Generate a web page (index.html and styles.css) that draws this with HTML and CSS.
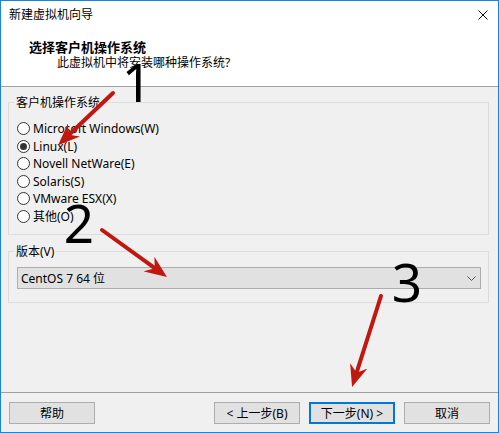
FILE: index.html
```html
<!DOCTYPE html>
<html lang="zh-CN">
<head>
    <meta charset="UTF-8">
    <title>新建虚拟机向导</title>
    <link rel="stylesheet" href="styles.css">
</head>
<body>
    <div class="window">
        <div class="titlebar">
            <div class="title">新建虚拟机向导</div>
            <svg class="close" width="10" height="10" viewBox="0 0 10 10">
                <path d="M0.5 0.5 L9.5 9.5 M9.5 0.5 L0.5 9.5" stroke="#111" stroke-width="1" fill="none"/>
            </svg>
        </div>

        <div class="header">
            <div class="header-title">选择客户机操作系统</div>
            <div class="header-desc">此虚拟机中将安装哪种操作系统?</div>
        </div>

        <div class="content">
            <fieldset class="group os">
                <legend>客户机操作系统</legend>
                <div class="radio"><span class="circle"></span>Microsoft Windows(W)</div>
                <div class="radio checked"><span class="circle"></span>Linux(L)</div>
                <div class="radio"><span class="circle"></span>Novell NetWare(E)</div>
                <div class="radio"><span class="circle"></span>Solaris(S)</div>
                <div class="radio"><span class="circle"></span>VMware ESX(X)</div>
                <div class="radio"><span class="circle"></span>其他(O)</div>
            </fieldset>

            <fieldset class="group version">
                <legend>版本(V)</legend>
                <div class="select">
                    <span>CentOS 7 64 位</span>
                    <svg class="chevron" width="9" height="5" viewBox="0 0 9 5">
                        <path d="M0.5 0.5 L4.5 4.5 L8.5 0.5" stroke="#555" stroke-width="1" fill="none"/>
                    </svg>
                </div>
            </fieldset>
        </div>

        <div class="footer">
            <div class="btn">帮助</div>
            <div class="spacer"></div>
            <div class="btn">&lt; 上一步(B)</div>
            <div class="btn default">下一步(N) &gt;</div>
            <div class="btn">取消</div>
        </div>

        <!-- 标注：红色箭头和数字 -->
        <svg class="marks" width="499" height="433" viewBox="0 0 499 433">
            <defs>
                <marker id="head" viewBox="0 0 22 18" markerWidth="22" markerHeight="18"
                        refX="7" refY="9" orient="auto" markerUnits="userSpaceOnUse">
                    <path d="M0 0 L22 9 L0 18 L7 9 Z" fill="#c1170e"/>
                </marker>
            </defs>
            <line x1="113" y1="93" x2="69" y2="134.8" class="arrow" marker-end="url(#head)"/>
            <line x1="102" y1="230" x2="154.8" y2="268.2" class="arrow" marker-end="url(#head)"/>
            <line x1="381" y1="296" x2="356.6" y2="372.7" class="arrow" marker-end="url(#head)"/>
            <text x="137" y="102" class="num">1</text>
            <text x="79" y="243" class="num">2</text>
            <text x="407" y="302" class="num">3</text>
        </svg>
    </div>
</body>
</html>
```

FILE: styles.css
```css
html, body {
    margin: 0;
    padding: 0;
    background: #ffffff;
}
body {
    font-family: "Noto Sans", "Noto Sans CJK SC", sans-serif;
    font-size: 12px;
    color: #000000;
}

.window {
    position: relative;
    width: 499px;
    height: 433px;
    box-sizing: border-box;
    border: 1px solid #1c84d6;
    display: flex;
    flex-direction: column;
    background: #f0f0f0;
}

.titlebar {
    height: 30px;
    box-sizing: border-box;
    padding: 0 10px 2px 8px;
    background: #ffffff;
    display: flex;
    align-items: center;
    justify-content: space-between;
}
.titlebar .title {
    line-height: 16px;
}
.titlebar .close {
    display: block;
}

.header {
    height: 56px;
    box-sizing: border-box;
    padding: 8px 0 0 28px;
    background: #ffffff;
    border-bottom: 1px solid #a0a0a0;
}
.header .header-title {
    font-weight: bold;
    font-size: 13px;
    line-height: 16px;
}
.header .header-desc {
    line-height: 16px;
    margin-left: 28px;
}

.content {
    flex: 1;
    padding-top: 8px;
}

.group {
    margin: 0 9px 0 7px;
    padding: 0 7px 9px 5px;
    border: 1px solid #dcdcdc;
}
.group legend {
    padding: 0 2px;
    line-height: 15px;
}
.group.os {
    padding-top: 10px;
}
.group.version {
    margin-top: 9px;
    padding-top: 8px;
    padding-bottom: 13px;
}

.radio {
    height: 17.5px;
    display: flex;
    align-items: center;
    margin-left: 3px;
    white-space: nowrap;
}
.radio .circle {
    width: 13px;
    height: 13px;
    box-sizing: border-box;
    border: 1px solid #333333;
    border-radius: 50%;
    background: #ffffff;
    margin-right: 3px;
    display: flex;
    align-items: center;
    justify-content: center;
}
.radio.checked .circle:after {
    content: "";
    width: 7px;
    height: 7px;
    border-radius: 50%;
    background: #333333;
}

.select {
    margin-left: 3px;
    height: 22px;
    box-sizing: border-box;
    border: 1px solid #adadad;
    background: #e1e1e1;
    padding: 0 4px 0 3px;
    display: flex;
    align-items: center;
    justify-content: space-between;
}
.select .chevron {
    display: block;
}

.footer {
    height: 40px;
    box-sizing: border-box;
    border-top: 1px solid #a0a0a0;
    padding: 9px 8px 8px 8px;
    display: flex;
    gap: 9px;
}
.footer .spacer {
    flex: 1;
}
.footer .btn {
    width: 86px;
    height: 22px;
    box-sizing: border-box;
    border: 1px solid #adadad;
    background: #e1e1e1;
    display: flex;
    align-items: center;
    justify-content: center;
    white-space: nowrap;
}
.footer .btn.default {
    border: 2px solid #0078d7;
}

.marks {
    position: absolute;
    left: -1px;
    top: -1px;
    pointer-events: none;
}
.marks .arrow {
    stroke: #c1170e;
    stroke-width: 4;
    stroke-linecap: round;
}
.marks .num {
    font-family: "Noto Sans", sans-serif;
    font-size: 53px;
    fill: #000000;
    text-anchor: middle;
}
```
